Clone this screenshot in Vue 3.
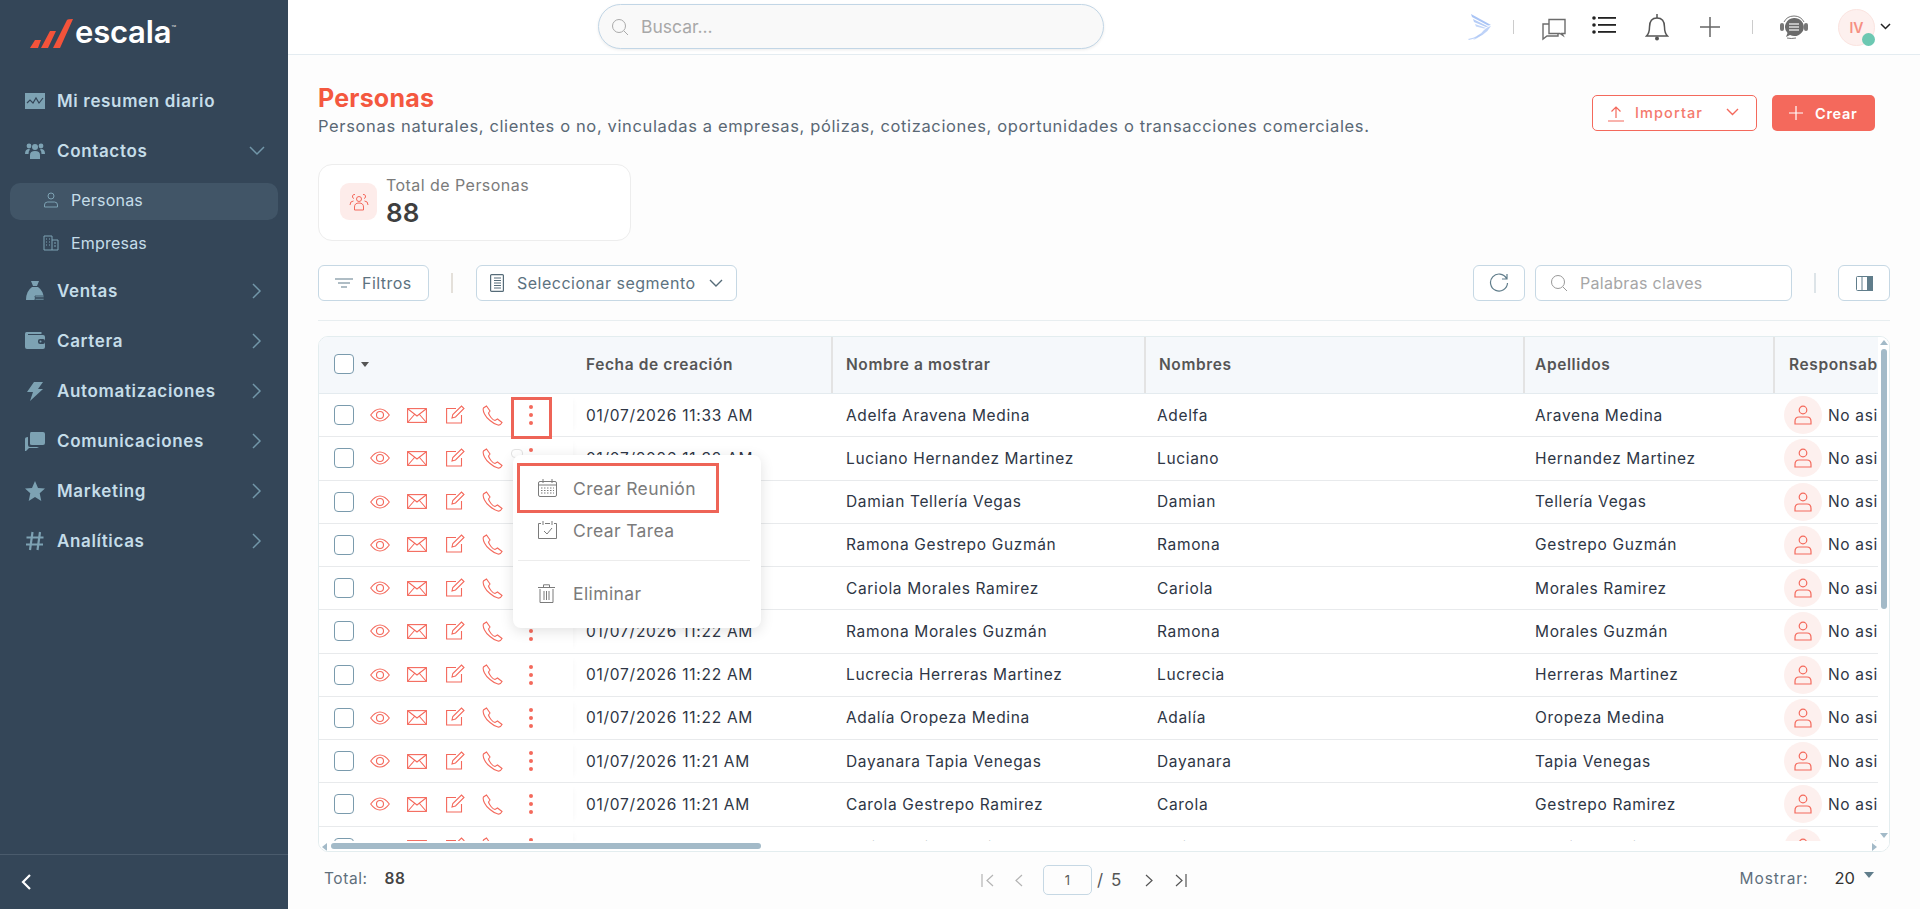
<script setup>
const rows = [
  ['01/07/2026 11:33 AM','Adelfa Aravena Medina','Adelfa','Aravena Medina'],
  ['01/07/2026 11:32 AM','Luciano Hernandez Martinez','Luciano','Hernandez Martinez'],
  ['01/07/2026 11:32 AM','Damian Tellería Vegas','Damian','Tellería Vegas'],
  ['01/07/2026 11:23 AM','Ramona Gestrepo Guzmán','Ramona','Gestrepo Guzmán'],
  ['01/07/2026 11:23 AM','Cariola Morales Ramirez','Cariola','Morales Ramirez'],
  ['01/07/2026 11:22 AM','Ramona Morales Guzmán','Ramona','Morales Guzmán'],
  ['01/07/2026 11:22 AM','Lucrecia Herreras Martinez','Lucrecia','Herreras Martinez'],
  ['01/07/2026 11:22 AM','Adalía Oropeza Medina','Adalía','Oropeza Medina'],
  ['01/07/2026 11:21 AM','Dayanara Tapia Venegas','Dayanara','Tapia Venegas'],
  ['01/07/2026 11:21 AM','Carola Gestrepo Ramirez','Carola','Gestrepo Ramirez'],
  ['01/07/2026 11:21 AM','Dalia Ramirez Tapia','Dalia','Ramirez Tapia'],
]
const nav = [
  { label: 'Ventas', icon: 'sales' },
  { label: 'Cartera', icon: 'wallet' },
  { label: 'Automatizaciones', icon: 'bolt' },
  { label: 'Comunicaciones', icon: 'chat' },
  { label: 'Marketing', icon: 'star' },
  { label: 'Analíticas', icon: 'hash' },
]
</script>

<template>
  <div class="app">
    <aside class="side">
      <div class="logo">
        <svg width="44" height="30" viewBox="0 0 44 30"><path fill="#f4533a" d="M0 29 L5 21 L11 21 L8 29Z M11 29 L20 12 L26 12 L18 29Z M23 29 L37 1 Q38 0 43 0 L30 29Z"/></svg>
        <span class="logo-text">escala</span><span class="tm">™</span>
      </div>
      <nav class="nav">
        <div class="nav-item">
          <svg class="nav-ico" viewBox="0 0 20 16"><path fill="#7da2b3" d="M0 0h20v16H0z"/><path fill="none" stroke="#344658" stroke-width="1.2" d="M2 10l3-3 3 3 3-5 3 5 4-5"/></svg>
          <span>Mi resumen diario</span>
        </div>
        <div class="nav-item">
          <svg class="nav-ico" viewBox="0 0 20 18"><g fill="#7da2b3"><circle cx="10" cy="5" r="3"/><circle cx="4" cy="4" r="2.4"/><circle cx="16" cy="4" r="2.4"/><path d="M5 17v-4q0-4 5-4t5 4v4z"/><path d="M0 12q0-5 4-5l1 .5Q3.400 9 3.500 12z"/><path d="M20 12q0-5-4-5l-1 .5q1.600 1.500 1.500 4.500z"/></g></svg>
          <span>Contactos</span>
          <svg class="chev" viewBox="0 0 16 10"><path d="M1 1l7 7 7-7"/></svg>
        </div>
        <div class="sub active">
          <svg class="sub-ico" viewBox="0 0 16 16"><circle cx="8" cy="4" r="3"/><path d="M1.500 15v-2q0-3 3-3h7q3 0 3 3v2z"/></svg>
          <span>Personas</span>
        </div>
        <div class="sub">
          <svg class="sub-ico" viewBox="0 0 16 16"><path d="M1 15V1h8v14zM9 5h6v10H9M3 4h1M6 4h1M3 7h1M6 7h1M3 10h1M6 10h1M11 8h2M11 11h2"/></svg>
          <span>Empresas</span>
        </div>
        <div v-for="n in nav" :key="n.label" class="nav-item">
          <svg class="nav-ico" viewBox="0 0 20 20">
            <g v-if="n.icon === 'sales'" fill="#7da2b3"><path d="M6 0h8l-2 5H8z"/><path d="M7 6h6q6 4 6 13H1Q1 10 7 6z"/><path stroke="#344658" stroke-width=".8" d="M10 15h9v1.500h-9zM10 17.500h9V19h-9z"/></g>
            <g v-else-if="n.icon === 'wallet'"><path fill="#7da2b3" d="M1.500 1h15v2H3V4h15q2 0 2 2v10q0 2-2 2H2q-2 0-2-2V3q0-2 1.500-2z"/><rect x="13" y="8" width="7" height="5" rx="2" fill="#344658"/><circle cx="15.500" cy="10.500" r="1" fill="#7da2b3"/></g>
            <path v-else-if="n.icon === 'bolt'" fill="#7da2b3" d="M9 1h9l-5 7h5L5 20l3-9H2z"/>
            <g v-else-if="n.icon === 'chat'" fill="#7da2b3"><path d="M6 1h12q2 0 2 2v9q0 2-2 2H7q-2 0-2-1V3q0-2 1-2z"/><path d="M3 6v8q0 2 2 2h9l-2 1H4l-3 3h-1V8q0-2 3-2z"/></g>
            <path v-else-if="n.icon === 'star'" fill="#7da2b3" d="M10 0l3 7 7 .6-5.300 4.700L16.300 20 10 16l-6.300 4 1.600-7.700L0 7.600 7 7z"/>
            <path v-else fill="none" stroke="#7da2b3" stroke-width="2.200" d="M7.500 1L5 19M15 1l-2.500 18M1.500 6.500h17M1 13.500h17"/>
          </svg>
          <span>{{ n.label }}</span>
          <svg class="chev right" viewBox="0 0 10 16"><path d="M1 1l7 7-7 7"/></svg>
        </div>
      </nav>
      <div class="side-foot">
        <svg width="12" height="18" viewBox="0 0 12 18"><path d="M10 2L3 9l7 7" fill="none" stroke="#fff" stroke-width="2.200"/></svg>
      </div>
    </aside>

    <div class="main">
      <header class="top">
        <div class="search">
          <svg class="s-ico" width="18" height="18" viewBox="0 0 18 18"><circle cx="8" cy="8" r="6.500"/><path d="M13 13l4 4"/></svg>
          <span>Buscar...</span>
        </div>
        <div class="top-icons">
          <svg class="t1" width="24" height="28" viewBox="0 0 24 28"><g fill="#a9c4f5"><path d="M3 1l20 11-3 .6L4 4z"/><path d="M5 6l15 7.500-2 .5L6 9z" opacity=".85"/><path d="M7 11l11 4-2 .6L8 13.500z" opacity=".7"/><path d="M23 13q-6 11-22 14l-1-1q11-2 16-9l4-3z" opacity=".75"/><path d="M14 21q-3 4-9 6l5-5z" opacity=".55"/></g></svg>
          <i class="tsep sep-a"></i>
          <svg class="t2" width="26" height="26" viewBox="0 0 26 26"><g fill="none" stroke="#6c6c6c" stroke-width="1.400"><path d="M8 4.500h16v14h-3l1 2-3-2H8z"/><path d="M8 9H2v15l4-3h11v-2.500"/></g></svg>
          <svg class="t3" width="24" height="20" viewBox="0 0 24 20"><g fill="#222"><circle cx="2" cy="3" r="1.800"/><circle cx="2" cy="10" r="1.800"/><circle cx="2" cy="17" r="1.800"/><rect x="6" y="2" width="18" height="1.800"/><rect x="6" y="9" width="18" height="1.800"/><rect x="6" y="16" width="18" height="1.800"/></g></svg>
          <svg class="t4" width="24" height="28" viewBox="0 0 24 28"><g fill="none" stroke="#555" stroke-width="1.500"><path d="M1.500 23q3-3 3-9 0-9 7.500-9t7.500 9q0 6 3 9z"/><path d="M12 1v4"/></g><circle cx="12" cy="25.500" r="2" fill="#555"/></svg>
          <svg class="t5" width="22" height="22" viewBox="0 0 22 22"><path d="M11 1v20M1 11h20" stroke="#666" stroke-width="1.500"/></svg>
          <i class="tsep sep-b"></i>
          <svg class="t6" width="30" height="26" viewBox="0 0 30 26"><path fill="none" stroke="#777" d="M5 8q3-6 10-6t10 6M8 24q4 1 9 0"/><rect x="1" y="9" width="4" height="8" rx="2" fill="#777"/><rect x="25" y="9" width="4" height="8" rx="2" fill="#777"/><path fill="#6b6b6b" d="M15 4a9.500 9 0 1 1-4 17l-4 2 1.500-4A9.500 9 0 0 1 15 4z"/><path stroke="#ddd" stroke-width="1.500" d="M10 10h10M10 13h10M10 16h10"/></svg>
          <div class="avatar">IV<i class="dot"></i></div>
          <svg class="t7" width="11" height="7" viewBox="0 0 11 7"><path d="M1 1l4.500 4.500L10 1" fill="none" stroke="#222" stroke-width="1.500"/></svg>
        </div>
      </header>

      <main class="content">
        <div class="head">
          <div>
            <h1>Personas</h1>
            <p>Personas naturales, clientes o no, vinculadas a empresas, pólizas, cotizaciones, oportunidades o transacciones comerciales.</p>
          </div>
          <div class="head-btns">
            <button class="btn-out">
              <svg width="16" height="17" viewBox="0 0 16 17"><path d="M8 13V2M3.500 6.500L8 2l4.500 4.500M0 16h16" fill="none" stroke="#f4695c" stroke-width="1.200"/></svg>
              <span>Importar</span>
              <svg class="bchev" width="13" height="8" viewBox="0 0 13 8"><path d="M1 1l5.500 5.500L12 1" fill="none" stroke="#f4695c" stroke-width="1.400"/></svg>
            </button>
            <button class="btn-fill">
              <svg width="14" height="14" viewBox="0 0 14 14"><path d="M7 0v14M0 7h14" stroke="#fff" stroke-width="1.200"/></svg>
              <span>Crear</span>
            </button>
          </div>
        </div>

        <div class="stat">
          <div class="stat-ico">
            <svg width="20" height="18" viewBox="0 0 20 18"><g fill="none" stroke="#f4695c" stroke-width="1"><circle cx="10" cy="6" r="2.500"/><path d="M5.500 17v-3q0-4 4.500-4t4.500 4v3z"/><path d="M6 1.500a2 2 0 1 0-1 4M14 1.500a2 2 0 1 1 1 4M1 12q0-4 3.500-4M19 12q0-4-3.500-4"/></g></svg>
          </div>
          <div>
            <div class="stat-l">Total de Personas</div>
            <div class="stat-n">88</div>
          </div>
        </div>

        <div class="tools">
          <button class="tbtn filt">
            <svg width="18" height="10" viewBox="0 0 18 10"><path d="M0 1h18M3 5h12M6 9h6" stroke="#607d8b" stroke-width="1.200"/></svg>
            <span>Filtros</span>
          </button>
          <i class="vsep"></i>
          <button class="tbtn seg">
            <svg width="14" height="18" viewBox="0 0 14 18"><rect x=".6" y=".6" width="12.800" height="16.800" rx="1" fill="none" stroke="#556b78" stroke-width="1.200"/><path d="M4 4h7M4 6.500h7M4 9h7M4 11.500h7M4 14h7" stroke="#556b78"/></svg>
            <span>Seleccionar segmento</span>
            <svg class="seg-chev" width="14" height="8" viewBox="0 0 14 8"><path d="M1 1l6 6 6-6" fill="none" stroke="#556b78" stroke-width="1.400"/></svg>
          </button>
          <div class="grow"></div>
          <button class="tbtn icon-btn">
            <svg width="20" height="20" viewBox="0 0 20 20"><path d="M17.500 5.500A8.500 8.500 0 1 0 18.500 10M18 1v5h-5" fill="none" stroke="#607d8b" stroke-width="1.200"/></svg>
          </button>
          <div class="kw">
            <svg width="18" height="18" viewBox="0 0 18 18"><circle cx="8" cy="8" r="6.500" fill="none" stroke="#999" stroke-width="1"/><path d="M13 13l4 4" stroke="#999"/></svg>
            <span>Palabras claves</span>
          </div>
          <i class="vsep right"></i>
          <button class="tbtn icon-btn">
            <svg width="17" height="15" viewBox="0 0 17 15"><rect x=".5" y=".5" width="16" height="14" rx="1" fill="none" stroke="#607d8b"/><path d="M6 0v15" stroke="#607d8b"/><rect x="11" y="0" width="6" height="15" fill="#607d8b"/></svg>
          </button>
        </div>

        <div class="tbl">
          <div class="thead">
            <div class="th first">
              <i class="cb"></i><i class="caret"></i>
            </div>
            <div class="th c1">Fecha de creación</div>
            <div class="th c2">Nombre a mostrar</div>
            <div class="th c3">Nombres</div>
            <div class="th c4">Apellidos</div>
            <div class="th c5">Responsable</div>
          </div>
          <div class="tbody">
            <div v-for="(r, i) in rows" :key="i" class="tr">
              <div class="td first">
                <i class="cb"></i>
                <svg class="ra eye" width="20" height="14" viewBox="0 0 20 14"><g fill="none" stroke="#f4695c" stroke-width="1.100"><path d="M.7 7Q5 1 10 1t9.300 6Q15 13 10 13T.7 7z"/><circle cx="10" cy="7" r="3.500"/></g></svg>
                <svg class="ra mail" width="20" height="15" viewBox="0 0 20 15"><g fill="none" stroke="#f4695c" stroke-width="1.100"><rect x=".6" y=".6" width="18.800" height="13.800"/><path d="M1 1l9 7 9-7M1 14l6.500-7.500M19 14l-6.500-7.500"/></g></svg>
                <svg class="ra edit" width="19" height="19" viewBox="0 0 19 19"><g fill="none" stroke="#f4695c" stroke-width="1.100"><path d="M15.500 10v8H.6V3.500H10"/><path d="M6 13l.8-3.500L15.500 1 18 3.500 9.500 12z"/></g></svg>
                <svg class="ra phone" width="21" height="21" viewBox="0 0 21 21"><path fill="none" stroke="#f4695c" stroke-width="1.100" d="M4.500 1L1.500 3Q.500 5 2.500 9T8 15.500q4 3.500 8 4.500 2.500.5 4-2.500L15.500 14l-2.500 1.500Q11 15 9 12.500T6.500 8L8 6z"/></svg>
                <svg class="ra dots" width="4" height="20" viewBox="0 0 4 20"><g fill="#f4695c"><circle cx="2" cy="2" r="2"/><circle cx="2" cy="10" r="2"/><circle cx="2" cy="18" r="2"/></g></svg>
              </div>
              <div class="td c1">{{ r[0] }}</div>
              <div class="td c2">{{ r[1] }}</div>
              <div class="td c3">{{ r[2] }}</div>
              <div class="td c4">{{ r[3] }}</div>
              <div class="td c5">
                <span class="resp"><svg width="18" height="20" viewBox="0 0 18 20"><g fill="none" stroke="#f4695c" stroke-width="1.200"><circle cx="9" cy="5" r="3.800"/><path d="M1 19v-2.500Q1 12 5 12h8q4 0 4 4.500V19z"/></g></svg></span>
                <span>No asignado</span>
              </div>
            </div>
          </div>
          <div class="vbar"><i class="up"></i><i class="vthumb"></i><i class="dn"></i></div>
          <div class="hbar"><i class="lf"></i><i class="hthumb"></i><i class="rt"></i></div>
        </div>

        <div class="foot">
          <div class="f-total"><span class="f-l">Total:</span><b>88</b></div>
          <div class="pager">
            <svg class="pg off" width="14" height="13" viewBox="0 0 14 13"><path d="M1 0v13M12 1L6 6.500l6 5.500" fill="none"/></svg>
            <svg class="pg off" width="8" height="13" viewBox="0 0 8 13"><path d="M7 1L1 6.500 7 12" fill="none"/></svg>
            <span class="pinput">1</span>
            <span class="ptot">/ 5</span>
            <svg class="pg on" width="8" height="13" viewBox="0 0 8 13"><path d="M1 1l6 5.500L1 12" fill="none"/></svg>
            <svg class="pg on" width="12" height="13" viewBox="0 0 12 13"><path d="M1 1l6 5.500L1 12M11 0v13" fill="none"/></svg>
          </div>
          <div class="show"><span class="f-l">Mostrar:</span><span class="shown">20</span><i class="scaret"></i></div>
        </div>

        <i class="hl-kebab"></i>
        <i class="tip-pill"></i>
        <div class="menu">
          <div class="mi hl">
            <svg width="19" height="18" viewBox="0 0 19 18"><g fill="none" stroke="#7b7b7b"><rect x=".5" y="2.500" width="18" height="15" rx="1.500"/><path d="M5 0v4M14 0v4M.5 6h18"/><path stroke-dasharray="1.500 1.500" d="M3 9h13M3 11.500h13M3 14h13"/></g></svg>
            <span>Crear Reunión</span>
          </div>
          <div class="mi t">
            <svg width="19" height="18" viewBox="0 0 19 18"><g fill="none" stroke="#7b7b7b"><path d="M3 2.500H.5v15h18v-15H16M7 2.500h5"/><path d="M5 0v4M14 0v4M6 10l3 3 5-6"/></g></svg>
            <span>Crear Tarea</span>
          </div>
          <hr />
          <div class="mi e">
            <svg width="17" height="19" viewBox="0 0 17 19"><g fill="none" stroke="#7b7b7b"><path d="M0 3.500h17M5.500 3V.8h6V3M2 5v13.500h13V5M6 7v9M8.500 7v9M11 7v9"/></g></svg>
            <span>Eliminar</span>
          </div>
        </div>
      </main>
    </div>
  </div>
</template>

<style>
html, body { margin: 0; overflow: hidden; }
</style>

<style scoped>
* { box-sizing: border-box; }
.app { display: flex; width: 1920px; height: 909px; font-family: Inter, "Open Sans", sans-serif; color: #2b3443; overflow: hidden; }
i { display: block; font-style: normal; }
button { font-family: inherit; cursor: pointer; white-space: nowrap; }

.side { width: 288px; flex: none; background: #344658; display: flex; flex-direction: column; color: #c5dde9; }
.logo { height: 54px; padding: 17px 0 0 30px; display: flex; align-items: flex-start; }
.logo svg { flex: none; margin-top: 2px; }
.logo-text { font-family: Inter, sans-serif; color: #fff; font-size: 31px; font-weight: 600; line-height: 30px; margin-left: 1px; letter-spacing: -0.2px; }
.tm { font-size: 8px; color: #ddd; margin-top: 6px; }
.nav { flex: 1; padding-top: 22px; }
.nav-item { height: 50px; padding: 0 23px 0 25px; display: flex; align-items: center; font-size: 17px; font-weight: 600; letter-spacing: .65px; }
.nav-ico { width: 20px; height: 20px; flex: none; margin-right: 12px; }
.chev { margin-left: auto; width: 16px; height: 10px; fill: none; stroke: #7297a9; stroke-width: 1.500; }
.chev.right { width: 10px; height: 16px; margin-right: 3px; }
.sub { height: 37px; margin: 0 10px; padding: 0 0 3px 33px; display: flex; align-items: center; border-radius: 10px; font-size: 16px; letter-spacing: .2px; font-weight: 400; }
.sub.active { background: #415567; margin-top: 7px; }
.sub + .sub { margin-top: 5px; margin-bottom: 4px; padding-bottom: 2px; }
.sub-ico { width: 16px; height: 16px; margin-right: 12px; fill: none; stroke: #7da2b3; stroke-width: 1; flex: none; }
.side-foot { height: 55px; border-top: 1px solid #4a5b6c; padding-left: 20px; display: flex; align-items: center; }

.main { flex: 1; min-width: 0; display: flex; flex-direction: column; background: #fdfdfd; }
.top { height: 55px; flex: none; background: #fff; border-bottom: 1px solid #e4ecf1; position: relative; display: flex; }
.search { margin: 4px 0 0 310px; width: 506px; height: 45px; border-radius: 23px; border: 1px solid #c2d6e6; background: #f9f9f9; box-shadow: 0 1px 3px rgba(0,0,0,.08); display: flex; align-items: center; padding-left: 12px; color: #a8a8a8; font-size: 17.5px; }
.s-ico { fill: none; stroke: #aaa; stroke-width: 1; margin-right: 12px; }
.top-icons { margin-left: auto; display: flex; align-items: center; padding-right: 29px; height: 54px; }
.t1 { margin-right: 21px; }
.tsep { width: 1px; height: 14px; background: #ccc; flex: none; }
.sep-a { margin-right: 27px; }
.t2 { margin-right: 25px; margin-top: 2px; }
.t3 { margin-right: 29px; margin-top: -4px; }
.t4 { margin-right: 30px; margin-top: -1px; }
.t5 { margin-right: 31px; }
.sep-b { margin-right: 26px; }
.t6 { margin-right: 29px; }
.avatar { width: 37px; height: 37px; border-radius: 50%; background: #fdf0ee; border: 1px solid #fbe4e0; color: #f68f82; font-size: 14px; font-weight: 600; display: flex; align-items: center; justify-content: center; position: relative; }
.dot { position: absolute; width: 13px; height: 13px; border-radius: 50%; background: #6cc8b2; right: -1px; bottom: -1px; }
.t7 { margin-left: 5px; margin-top: -1px; }

.content { flex: 1; position: relative; padding: 29px 30px 0 30px; min-height: 0; }
.head { display: flex; justify-content: space-between; height: 65px; }
h1 { margin: 0; font-size: 25px; line-height: 28px; font-weight: 700; color: #f4583f; letter-spacing: .2px; }
p { margin: 4px 0 0; font-size: 16.500px; line-height: 20px; color: #5a6875; letter-spacing: .64px; white-space: nowrap; }
.head-btns { display: flex; gap: 15px; margin: 11px 15px 0 0; }
.btn-out { width: 165px; height: 36px; border: 1px solid #f4695c; border-radius: 5px; background: #fff; color: #f4796d; display: flex; align-items: center; padding: 0 17px 0 15px; font-size: 14.500px; font-weight: 500; letter-spacing: 1.100px; }
.btn-out span { margin-left: 11px; margin-top: -2px; }
.bchev { margin-left: auto; margin-top: -3px; }
.btn-fill { width: 103px; height: 36px; border: 0; border-radius: 5px; background: #f4695c; color: #fff; display: flex; align-items: center; padding-left: 17px; font-size: 14.500px; font-weight: 600; letter-spacing: .7px; gap: 12px; }

.stat { margin: 15px 0 0 0; width: 313px; height: 77px; background: #fff; border: 1px solid #ededed; border-radius: 14px; display: flex; align-items: center; padding-left: 21px; gap: 9px; }
.stat-ico { width: 37px; height: 37px; border-radius: 9px; background: #fdecea; display: flex; align-items: center; justify-content: center; flex: none; margin-top: -2px; }
.stat-l { font-size: 16px; line-height: 20px; color: #7b7b7b; letter-spacing: .45px; margin-top: -3px; }
.stat-n { font-size: 26px; line-height: 30px; font-weight: 600; color: #3f3f3f; margin-top: 3px; }

.tools { margin-top: 24px; height: 56px; padding-bottom: 20px; border-bottom: 1px solid #e8eef0; display: flex; align-items: flex-start; }
.tbtn { height: 36px; background: #fff; border: 1px solid #c6d8e4; border-radius: 6px; color: #5c7280; font-size: 16px; display: flex; align-items: center; font-weight: 400; letter-spacing: .45px; }
.tbtn svg { flex: none; }
.filt { width: 111px; padding-left: 16px; gap: 9px; }
.vsep { width: 2px; height: 20px; background: #e4e0da; margin: 8px 23px 0 22px; }
.seg { width: 261px; padding-left: 13px; gap: 13px; letter-spacing: .5px; }
.seg-chev { margin-left: auto; margin-right: 13px; }
.grow { flex: 1; }
.icon-btn { width: 52px; justify-content: center; }
.kw { width: 257px; height: 36px; margin-left: 10px; background: #fff; border: 1px solid #c6d8e4; border-radius: 6px; display: flex; align-items: center; padding-left: 14px; gap: 12px; color: #a6a6a6; font-size: 16px; letter-spacing: .3px; }
.vsep.right { margin: 8px 22px 0 22px; background: #dde4e8; }

.tbl { margin-top: 15px; height: 516px; width: 1572px; border: 1px solid #e3edef; border-radius: 10px; position: relative; overflow: hidden; background: #fff; }
.thead { display: flex; height: 57px; background: #f5f8fb; border-bottom: 1px solid #e4ebef; }
.tr { display: flex; height: 43.25px; border-bottom: 1px solid #e8eaec; }
.first { width: 254px; flex: none; display: flex; align-items: center; padding-left: 15px; position: relative; }
.td.first { box-shadow: 6px 0 6px -6px rgba(0,0,0,.04); }
.c1 { width: 258px; flex: none; }
.c2 { width: 313px; flex: none; }
.c3 { width: 379px; flex: none; }
.c4 { width: 250px; flex: none; }
.c5 { width: 118px; flex: none; overflow: hidden; white-space: nowrap; }
.th { font-size: 15.500px; font-weight: 600; color: #555; letter-spacing: .6px; display: flex; align-items: center; padding: 0 0 2px 13px; border-left: 2px solid #e3e3e3; white-space: nowrap; }
.th.first { border-left: 0; padding-left: 15px; background: #f5f8fb; }
.th.c1 { border-left: 0; padding-left: 13px; box-shadow: -2px 0 0 #f0f3f6; }
.th.c4 { padding-left: 10px; }
.th.c5 { padding-left: 14px; }
.tbody { height: 448px; overflow: hidden; }
.td { font-size: 15.500px; color: #2e3645; display: flex; align-items: center; letter-spacing: .65px; padding-left: 15px; }
.td.c1 { padding-left: 13px; letter-spacing: .73px; }
.td.c3 { padding-left: 13px; }
.td.c4 { padding-left: 12px; }
.td.c5 { padding-left: 11px; }
.td.first { padding-left: 15px; }
.cb { width: 20px; height: 20px; flex: none; border: 1px solid #7a9bad; border-radius: 4px; background: #fff; }
.caret { width: 0; height: 0; border: 4.500px solid transparent; border-top: 5px solid #555; border-bottom: 0; margin-left: 7px; }
.ra { flex: none; }
.eye { margin-left: 16px; }
.mail { margin-left: 17px; }
.edit { margin-left: 19px; margin-top: -2px; }
.phone { margin-left: 17px; }
.dots { margin-left: 26px; }
.resp { width: 38px; height: 38px; border-radius: 50%; background: #fdf0ee; display: flex; align-items: center; justify-content: center; margin-right: 6px; flex: none; }
.vbar { position: absolute; top: 0; right: 0; bottom: 0; width: 11px; background: #fff; }
.up { width: 0; height: 0; border: 4px solid transparent; border-bottom: 5px solid #a3bac8; border-top: 0; margin: 3px 0 0 2px; }
.vthumb { width: 6px; height: 260px; border-radius: 3px; background: #a3bac8; margin: 4px 0 0 3px; }
.dn { position: absolute; right: 1px; bottom: 13px; width: 0; height: 0; border: 4px solid transparent; border-top: 5px solid #a3bac8; border-bottom: 0; }
.hbar { position: absolute; left: 0; right: 0; bottom: 0; height: 10px; background: #fff; }
.lf { position: absolute; left: 3px; top: 2px; width: 0; height: 0; border: 4px solid transparent; border-right: 5px solid #a3bac8; border-left: 0; }
.hthumb { position: absolute; left: 12px; top: 2px; width: 430px; height: 6px; border-radius: 3px; background: #a3bac8; }
.rt { position: absolute; right: 12px; top: 2px; width: 0; height: 0; border: 4px solid transparent; border-left: 5px solid #a3bac8; border-right: 0; }

.foot { display: flex; align-items: center; height: 52px; padding: 0 0 0 6px; font-size: 15.500px; position: relative; }
.f-l { color: #5f6f7c; letter-spacing: .55px; }
.f-total b { margin-left: 17px; font-weight: 600; color: #444; letter-spacing: .5px; }
.f-total { flex: 1; }
.pager { position: absolute; left: 663px; top: 13px; display: flex; align-items: center; height: 30px; }
.pg { fill: none; stroke-width: 1.200; flex: none; }
.pg.off { stroke: #b4b4b4; margin-right: 20px; }
.pg.on { stroke: #555; margin-left: 22px; }
.pg path { stroke: inherit; }
.pinput { width: 49px; height: 30px; border: 1px solid #c6d8e4; border-radius: 5px; display: flex; align-items: center; justify-content: center; font-size: 13px; color: #5b5b5b; }
.ptot { margin-left: 5px; font-size: 17px; color: #555; letter-spacing: 1.500px; white-space: nowrap; }
.show { display: flex; align-items: center; margin-right: 16px; }
.show .f-l { letter-spacing: .95px; }
.shown { margin-left: 26px; color: #333; font-size: 16.500px; }
.scaret { width: 0; height: 0; border: 5px solid transparent; border-top: 6px solid #607d8b; border-bottom: 0; margin: -6px 0 0 9px; }

.hl-kebab { position: absolute; left: 223px; top: 342px; width: 41px; height: 42px; border: 3px solid #ee6457; pointer-events: none; }
.tip-pill { position: absolute; left: 223px; top: 394px; width: 12px; height: 9px; border: 1px solid #e3e3e3; border-radius: 4px; background: #fff; }
.menu { position: absolute; left: 225px; top: 400px; width: 248px; height: 173px; background: #fff; border-radius: 8px; box-shadow: 0 3px 14px rgba(0,0,0,.12); padding-top: 8px; }
.mi { height: 42px; display: flex; align-items: center; padding-left: 25px; gap: 16px; font-size: 17.500px; color: #7b7b7b; letter-spacing: .4px; }
.mi.hl { margin: 0 0 0 4px; width: 202px; height: 50px; border: 3px solid #ee6457; padding-left: 18px; }
.mi.t { margin-top: -3px; height: 40px; }
.menu hr { margin: 10px 11px 0 5px; border: 0; border-top: 1px solid #ececec; }
.mi.e { margin-top: 11px; gap: 18px; }
</style>
